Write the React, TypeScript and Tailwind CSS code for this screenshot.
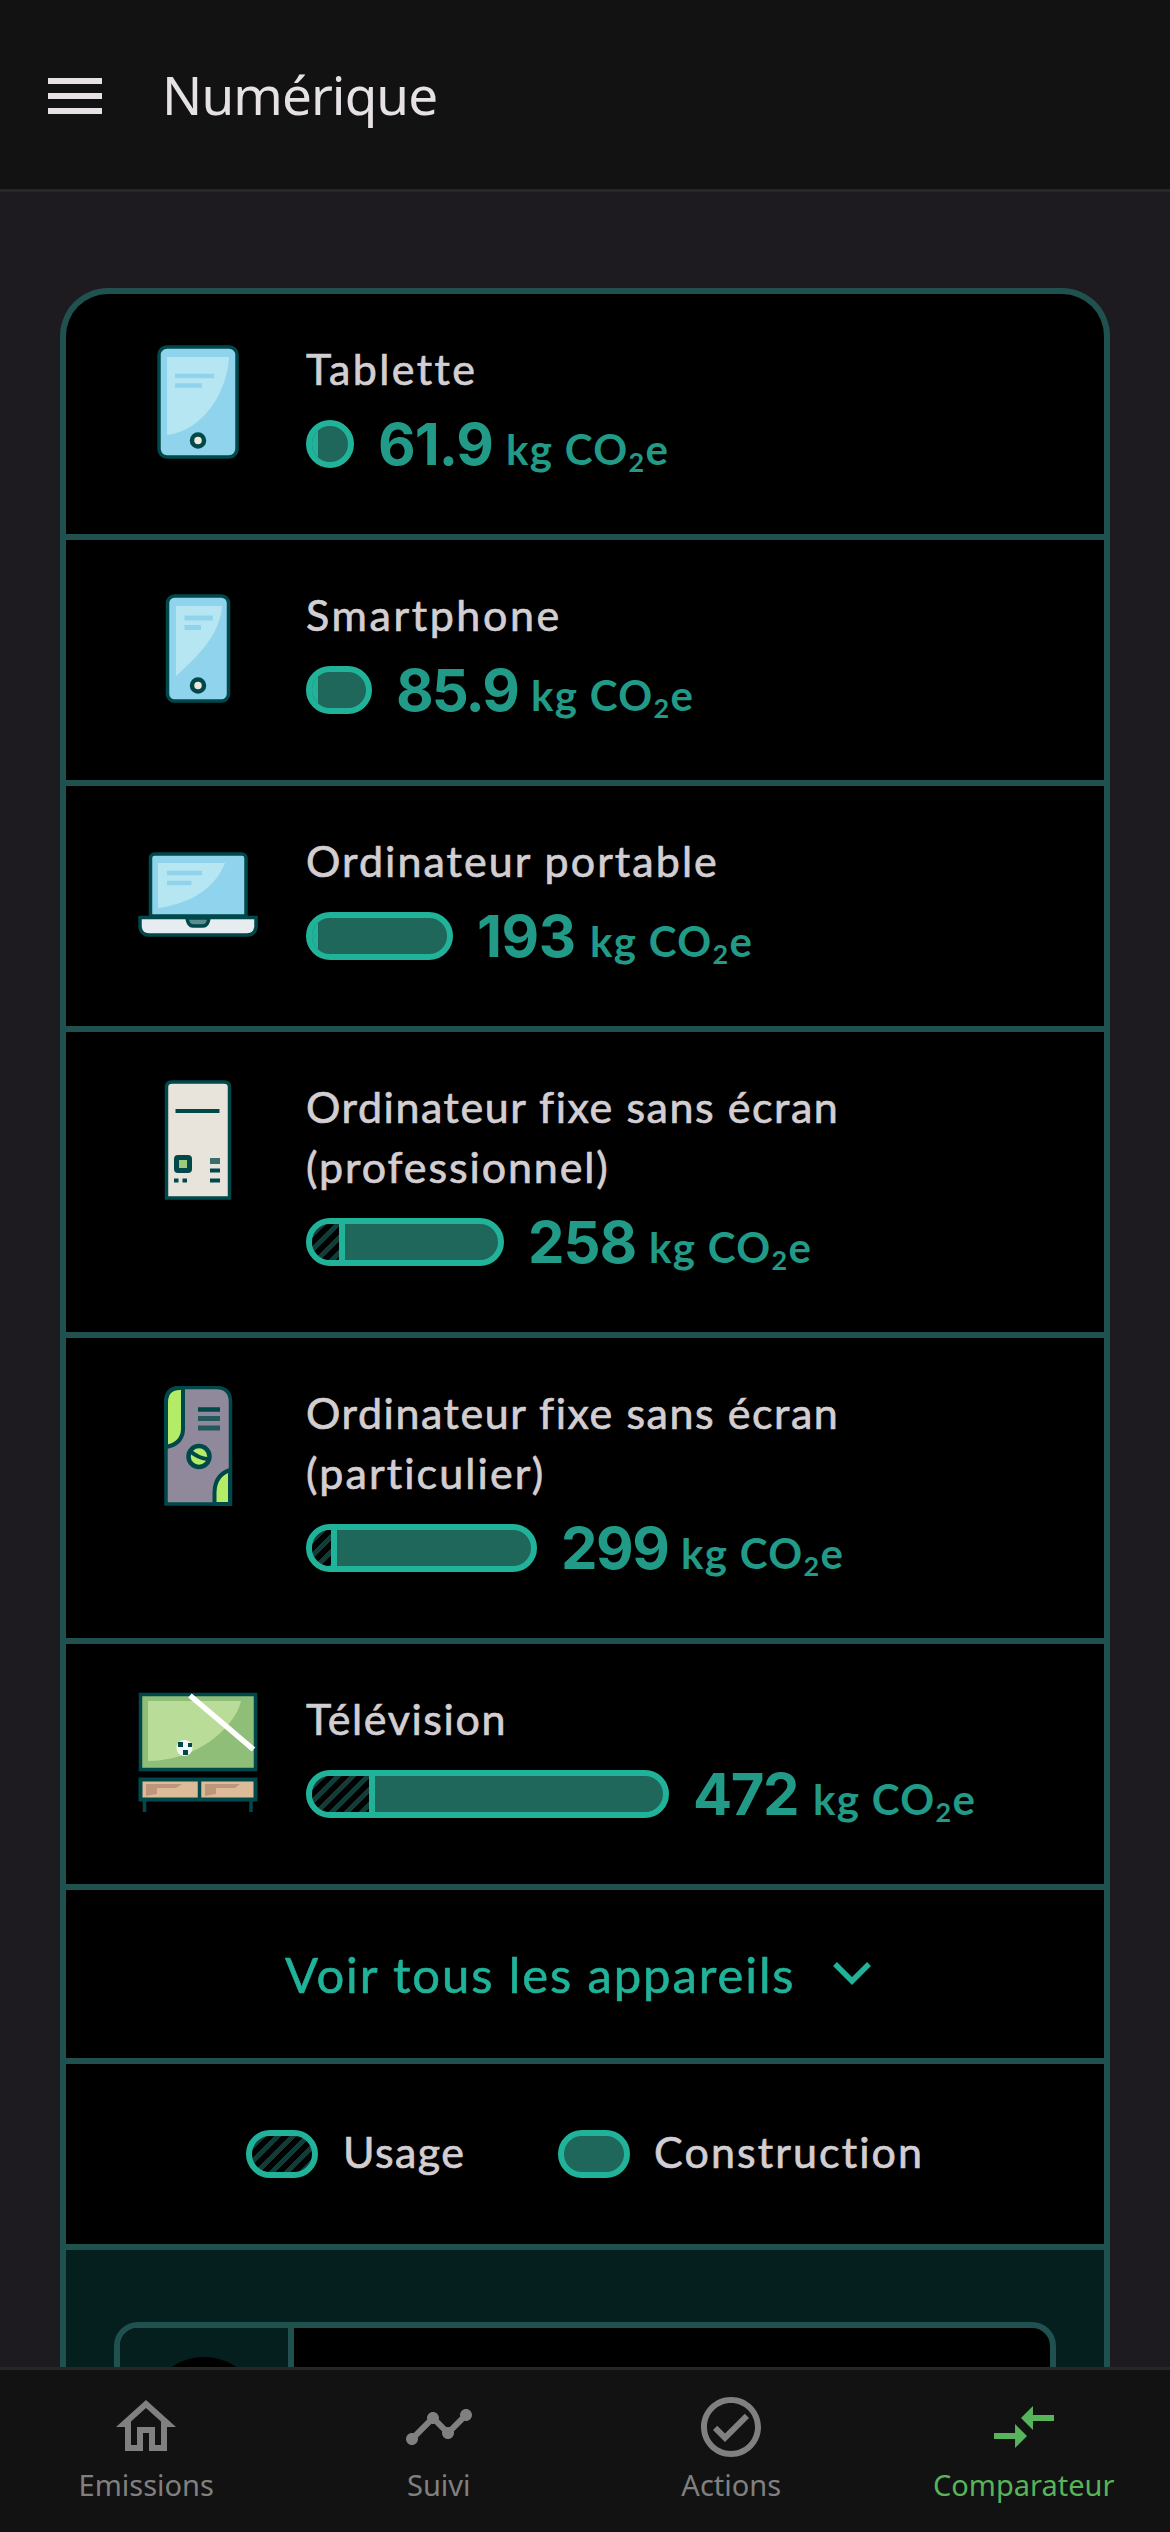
import type { ReactNode } from "react";

const INK = "#00484a";

function TabletIcon() {
  return (
    <svg viewBox="0 0 120 120" className="size-[120px]">
      <rect x="21" y="5" width="78" height="110" rx="8" fill="#8fd4ec" stroke={INK} strokeWidth="3.5" />
      <path d="M29 15H91C89 50 66 88 29 93Z" fill="#b6e6f2" />
      <path d="M37 34H76M37 43.5H64" stroke="#8fd4ec" strokeWidth="4.5" />
      <circle cx="60" cy="98.5" r="6" fill="#efe6dc" stroke={INK} strokeWidth="4.5" />
    </svg>
  );
}

function PhoneIcon() {
  return (
    <svg viewBox="0 0 120 120" className="size-[120px]">
      <rect x="29.5" y="8" width="61" height="105" rx="7" fill="#8fd4ec" stroke={INK} strokeWidth="3.5" />
      <path d="M38 18H84C82 46 62 66 38 88Z" fill="#b6e6f2" />
      <path d="M46.5 30H75M46.5 39.5H63" stroke="#8fd4ec" strokeWidth="5" />
      <circle cx="60" cy="97.5" r="6" fill="#efe6dc" stroke={INK} strokeWidth="4.5" />
    </svg>
  );
}

function LaptopIcon() {
  return (
    <svg viewBox="0 0 120 120" className="size-[120px]">
      <path d="M12.5 82V24a4 4 0 0 1 4-4H104a4 4 0 0 1 4 4V82Z" fill="#8fd4ec" stroke={INK} strokeWidth="3.5" />
      <path d="M20 29H87C78 52 56 69 20 74Z" fill="#b6e6f2" />
      <path d="M29 39H64M29 49H53.5" stroke="#8fd4ec" strokeWidth="4.5" />
      <path d="M2 83.5H118V93Q117 101 109 101H11Q3 101 2 93Z" fill="#e6ecef" stroke={INK} strokeWidth="3.5" />
      <path d="M49 84H71Q70 92 65 92H55Q50 92 49 84Z" fill="#5f8a92" stroke={INK} strokeWidth="3.5" />
    </svg>
  );
}

function OfficePcIcon() {
  return (
    <svg viewBox="0 0 120 120" className="size-[120px]">
      <path d="M28.5 118V7Q28.5 2 34 2H86Q91.5 2 91.5 7V118Z" fill="#e8e4dc" stroke={INK} strokeWidth="3.5" />
      <path d="M37.5 31H81.5" stroke={INK} strokeWidth="4" />
      <rect x="38.5" y="77.5" width="13" height="13" rx="1.5" fill="#9cc97c" stroke={INK} strokeWidth="5" />
      <path d="M36 100.5H40.5M44.5 100.5H49M72 90.5H82M72 100.5H82" stroke={INK} strokeWidth="4" />
      <path d="M72 81H82" stroke="#3a6e6a" strokeWidth="6" />
    </svg>
  );
}

function GamingPcIcon() {
  return (
    <svg viewBox="0 0 120 120" className="size-[120px]">
      <path d="M28 118V16Q28 1.500 42 1.500H78Q92.500 1.500 92.500 16V118Z" fill="#8f899b" />
      <path d="M28 61V16Q28 2 42 2H45V44Q44 58 28 61Z" fill="#b4ec68" stroke={INK} strokeWidth="4" />
      <path d="M92 84Q77 89 76.500 106V118H92Z" fill="#b4ec68" stroke={INK} strokeWidth="4" />
      <path d="M28 118V16Q28 1.500 42 1.500H78Q92.500 1.500 92.500 16V118Z" fill="none" stroke={INK} strokeWidth="3.5" />
      <path d="M60 23.5H82" stroke={INK} strokeWidth="4.5" />
      <path d="M60 32.5H82M60 42H82" stroke="#24585c" strokeWidth="5" />
      <circle cx="61" cy="70.5" r="10.5" fill="#b4ec68" stroke={INK} strokeWidth="4.5" />
      <path d="M52 65Q60 72 69 73" stroke={INK} strokeWidth="4" fill="none" />
    </svg>
  );
}

function TvIcon() {
  return (
    <svg viewBox="0 0 120 120" className="size-[120px]">
      <rect x="2.5" y="2.5" width="115" height="75" fill="#8fbe79" stroke={INK} strokeWidth="3.5" />
      <path d="M10 9H103C96 38 56 69 10 69Z" fill="#b9dd98" />
      <path d="M52 3.5L115.5 57.5" stroke="#fff" strokeWidth="5.5" />
      <circle cx="46.5" cy="56" r="8" fill="#f2f6f6" />
      <path d="M40 50h5v5h-5zM50 51h4v4h-4zM45 58h5v5h-5z" fill={INK} />
      <path d="M6.5 108V120M113 108V120" stroke={INK} strokeWidth="3.5" />
      <rect x="2.5" y="87.5" width="115" height="20" fill="#dcbb98" stroke={INK} strokeWidth="4" />
      <path d="M8 92H44L38 96H19V102L8 104ZM67 92H102L97 96H78V102L67 104Z" fill="#bf967c" />
      <path d="M61.5 86V109" stroke={INK} strokeWidth="3.5" />
    </svg>
  );
}

type Device = {
  icon: ReactNode;
  lines: { text: string; tracking: string }[];
  bar: string;
  usage: string;
  value: string;
  valueStyle: string;
};

const devices: Device[] = [
  { icon: <TabletIcon />, lines: [{ text: "Tablette", tracking: "tracking-[2.4px]" }], bar: "w-[48px]", usage: "w-[6px]", value: "61.9", valueStyle: "w-[128px] tracking-[-1px]" },
  { icon: <PhoneIcon />, lines: [{ text: "Smartphone", tracking: "tracking-[2.6px]" }], bar: "w-[66px]", usage: "w-[6px]", value: "85.9", valueStyle: "w-[135px] tracking-[-2px]" },
  { icon: <LaptopIcon />, lines: [{ text: "Ordinateur portable", tracking: "tracking-[2.05px]" }], bar: "w-[147px]", usage: "w-[6px]", value: "193", valueStyle: "w-[113px] tracking-[-0.5px]" },
  {
    icon: <OfficePcIcon />,
    lines: [
      { text: "Ordinateur fixe sans écran", tracking: "tracking-[1.55px]" },
      { text: "(professionnel)", tracking: "tracking-[1.9px]" },
    ],
    bar: "w-[198px]", usage: "w-[33px]", value: "258", valueStyle: "w-[121px] tracking-[-1px]",
  },
  {
    icon: <GamingPcIcon />,
    lines: [
      { text: "Ordinateur fixe sans écran", tracking: "tracking-[1.55px]" },
      { text: "(particulier)", tracking: "tracking-[2.1px]" },
    ],
    bar: "w-[231px]", usage: "w-[25px]", value: "299", valueStyle: "w-[120px] tracking-[-1.5px]",
  },
  { icon: <TvIcon />, lines: [{ text: "Télévision", tracking: "tracking-[1.6px]" }], bar: "w-[363px]", usage: "w-[63px]", value: "472", valueStyle: "w-[120px] tracking-[-1.5px]" },
];

const HATCH = "bg-[repeating-linear-gradient(135deg,#000_0_5px,#123c38_5px_10.6px)]";

function DeviceRow({ device }: { device: Device }) {
  return (
    <div className="flex border-b-6 border-[#1f524e] pt-[45px] pb-[66px] pl-[72px]">
      <div className="mt-[3px] h-[60px] w-[120px] shrink-0">{device.icon}</div>
      <div className="ml-12">
        {device.lines.map((line) => (
          <div
            key={line.text}
            className={`h-[60px] text-[43px] leading-[60px] whitespace-nowrap text-[#d2ced2] [-webkit-text-stroke:0.7px_#d2ced2] ${line.tracking}`}
          >
            {line.text}
          </div>
        ))}
        <div className="mt-[21px] flex h-12 items-center gap-6">
          <div className={`flex h-12 shrink-0 overflow-hidden rounded-full border-6 border-[#20b39a] bg-[#1f665b] ${device.bar}`}>
            <div className={`h-full shrink-0 border-r-6 border-[#20b39a] ${HATCH} ${device.usage}`} />
          </div>
          <div className="flex items-baseline pt-[10px] whitespace-nowrap text-[#219a87]">
            <span className={`font-['Inter',sans-serif] text-[58px] leading-[60px] font-bold ${device.valueStyle}`}>{device.value}</span>
            <span className="text-[42px] leading-[60px] font-bold tracking-[1.3px]">
              kg CO<span className="relative top-[7px] text-[27px]">2</span>e
            </span>
          </div>
        </div>
      </div>
    </div>
  );
}

const tabs = [
  {
    label: "Emissions",
    active: false,
    d: "M12 5.69l5 4.5V18h-2v-6H9v6H7v-7.81l5-4.5M12 3L2 12h3v8h6v-6h2v6h6v-8h3L12 3z",
  },
  {
    label: "Suivi",
    active: false,
    d: "M23 8c0 1.1-.9 2-2 2-.18 0-.35-.02-.51-.07l-3.56 3.55c.05.16.07.34.07.52 0 1.1-.9 2-2 2s-2-.9-2-2c0-.18.02-.36.07-.52l-2.55-2.55c-.16.05-.34.07-.52.07s-.36-.02-.52-.07l-4.55 4.56c.05.16.07.33.07.51 0 1.1-.9 2-2 2s-2-.9-2-2 .9-2 2-2c.18 0 .35.02.51.07l4.56-4.55C8.02 9.36 8 9.18 8 9c0-1.1.9-2 2-2s2 .9 2 2c0 .18-.02.36-.07.52l2.55 2.55c.16-.05.34-.07.52-.07s.36.02.52.07l3.55-3.56C19.02 8.35 19 8.18 19 8c0-1.1.9-2 2-2s2 .9 2 2z",
  },
  {
    label: "Actions",
    active: false,
    d: "M12 2C6.48 2 2 6.48 2 12s4.48 10 10 10 10-4.48 10-10S17.52 2 12 2zm0 18c-4.41 0-8-3.59-8-8s3.59-8 8-8 8 3.59 8 8-3.59 8-8 8zm4.59-12.42L10 14.17l-2.59-2.58L6 13l4 4 8-8z",
  },
  {
    label: "Comparateur",
    active: true,
    d: "M9.01 14H2v2h7.01v3L13 15l-3.99-4v3zm5.98-1v-3H22V8h-7.01V5L11 9l3.99 4z",
  },
];

export default function App() {
  return (
    <div className="flex h-[2532px] w-[1170px] flex-col overflow-hidden bg-[#1d1b20] font-['Lato',sans-serif]">
      <header className="flex h-48 shrink-0 items-center border-b-3 border-[#272729] bg-[#121212] pt-[3px] pl-12">
        <div className="flex w-[54px] flex-col gap-[9px]">
          <div className="h-[6px] bg-[#e6e1e5]" />
          <div className="h-[6px] bg-[#e6e1e5]" />
          <div className="h-[6px] bg-[#e6e1e5]" />
        </div>
        <h1 className="mb-[3px] ml-[60px] font-['Noto_Sans',sans-serif] text-[53px] leading-[60px] tracking-[-0.9px] text-[#e6e1e5]">Numérique</h1>
      </header>

      <main className="min-h-0 flex-1 overflow-hidden px-[60px] pt-24">
        <div className="overflow-hidden rounded-t-[48px] border-6 border-b-0 border-[#1f524e] bg-black">
          {devices.map((device) => (
            <DeviceRow key={device.value} device={device} />
          ))}

          <div className="flex h-[174px] items-center border-b-6 border-[#1f524e] pl-[219px] text-[#20b39a]">
            <span className="w-[505px] text-[49px] leading-[60px] tracking-[1.9px] whitespace-nowrap [-webkit-text-stroke:0.6px_#20b39a]">
              Voir tous les appareils
            </span>
            <svg viewBox="0 0 40 26" className="ml-[42px] h-[26px] w-[40px]" fill="none" stroke="currentColor" strokeWidth="5.5">
              <path d="M3 3L20 20L37 3" />
            </svg>
          </div>

          <div className="flex h-[186px] items-center border-b-6 border-[#1f524e] pl-[180px] text-[43px] leading-[60px] text-[#d2ced2] [-webkit-text-stroke:0.7px_#d2ced2]">
            <div className={`h-12 w-[72px] rounded-full border-6 border-[#20b39a] ${HATCH}`} />
            <span className="mb-[5px] ml-[25px] w-[215px] tracking-[1.4px]">Usage</span>
            <div className="h-12 w-[72px] rounded-full border-6 border-[#20b39a] bg-[#1f665b]" />
            <span className="mb-[5px] ml-6 tracking-[2.1px]">Construction</span>
          </div>

          <div className="bg-[#051f1f] px-12 pt-[72px]">
            <div className="flex h-[240px] overflow-hidden rounded-[24px] border-6 border-[#1f524e] bg-black">
              <div className="flex w-[174px] justify-center border-r-6 border-[#1f524e] bg-[#051f1f] pt-[29px]">
                <div className="size-[114px] rounded-full bg-black" />
              </div>
            </div>
          </div>
        </div>
      </main>

      <nav className="grid h-[165px] shrink-0 grid-cols-4 border-t-3 border-[#272729] bg-[#121212] font-['Noto_Sans',sans-serif]">
        {tabs.map((tab) => (
          <div key={tab.label} className={`flex flex-col items-center pt-[21px] ${tab.active ? "text-[#57b45a]" : "text-[#808080]"}`}>
            <svg viewBox="0 0 24 24" className="size-[72px]" fill="currentColor">
              <path d={tab.d} />
            </svg>
            <span className="mt-[2px] text-[29px] leading-[40px]">{tab.label}</span>
          </div>
        ))}
      </nav>
    </div>
  );
}
